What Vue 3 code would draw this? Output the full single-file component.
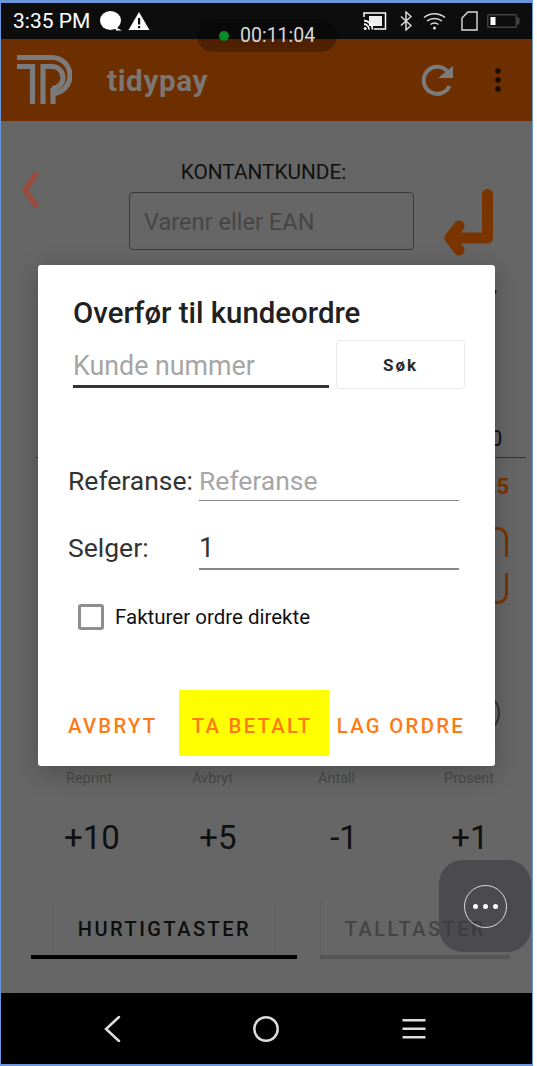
<template>
  <div class="phone">
    <div class="status-bar">
      <span class="time">3:35 PM</span>
      <svg width="24" height="22" viewBox="0 0 24 22">
        <ellipse cx="11.500" cy="10.500" rx="10.500" ry="9.500" fill="#fff" />
        <path d="M16 17l7 3.500h-6z" fill="#fff" />
      </svg>
      <svg class="st-warn" width="22" height="20" viewBox="0 0 22 20">
        <path d="M11 1L21.500 19H.5z" fill="#fff" />
        <rect x="10" y="7" width="2.200" height="6.500" fill="#0d0d0d" />
        <rect x="10" y="15" width="2.200" height="2.200" fill="#0d0d0d" />
      </svg>
      <div class="st-right">
        <svg width="24" height="20" viewBox="0 0 24 20" fill="none" stroke="#fff" stroke-width="1.500">
          <path d="M1 6V2h21.500v16H11" />
          <rect x="6" y="5" width="13" height="10" fill="#eee" stroke="none" />
          <path d="M1 9.500a9 9 0 0 1 8.500 9M1 13a5.500 5.500 0 0 1 5 5.500" stroke-width="1.800" />
          <circle cx="2.200" cy="17.500" r="1.500" fill="#fff" stroke="none" />
        </svg>
        <svg class="st-bt" width="12" height="20" viewBox="0 0 12 20" fill="none" stroke="#ddd" stroke-width="1.500">
          <path d="M1 5.500l10 9-5 4.500V1l5 4.500-10 9" />
        </svg>
        <svg class="st-wifi" width="23" height="18" viewBox="0 0 23 18" fill="none" stroke="#ddd" stroke-width="1.500">
          <path d="M1 5.500c6-5 15-5 21 0M4 9c4.500-3.500 10.500-3.500 15 0M7.500 12.500c2.500-2 5.500-2 8 0" />
          <circle cx="11.500" cy="16" r="1.500" fill="#ddd" stroke="none" />
        </svg>
        <svg class="st-sim" width="17" height="20" viewBox="0 0 17 20" fill="none" stroke="#ddd" stroke-width="1.400">
          <path d="M7 1h9v18H1V7z" />
        </svg>
        <svg class="st-batt" width="33" height="14" viewBox="0 0 33 14">
          <rect x=".7" y=".7" width="28.600" height="12.600" rx="1" fill="none" stroke="#444" stroke-width="1.400" />
          <rect x="30" y="3.500" width="2.500" height="7" fill="#444" />
          <rect x="3.500" y="3" width="5" height="8" fill="#fff" />
        </svg>
      </div>
    </div>

    <header class="app-bar">
      <svg class="logo" width="56" height="52" viewBox="0 0 56 52" fill="none" stroke="#7b7b7b" stroke-width="5.200">
        <path d="M1 3.500h35a18 18 0 0 1 0 36" />
        <path d="M1 12.500h15.500V50" />
        <path d="M27 50V12.500h9a11 11 0 0 1 0 22" />
        <path d="M37 34v16" />
      </svg>
      <span class="brand">tidypay</span>
      <svg class="refresh" width="36" height="36" viewBox="0 0 36 36" fill="none">
        <path d="M29.500 24A13.500 13.500 0 1 1 27 9" stroke="#7b7b7b" stroke-width="4" />
        <path d="M33 4v12H18z" fill="#7b7b7b" />
      </svg>
      <svg class="more" width="6" height="24" viewBox="0 0 6 24" fill="#1c0c00">
        <circle cx="3" cy="3" r="2.800" />
        <circle cx="3" cy="12" r="2.800" />
        <circle cx="3" cy="21" r="2.800" />
      </svg>
    </header>

    <main class="content">
      <div class="search-row">
        <svg class="back-arrow" width="20" height="38" viewBox="0 0 20 38" fill="none" stroke="#9a4b3e" stroke-width="5.500">
          <path d="M16 2L4 19l12 17" />
        </svg>
        <div class="search-col">
          <div class="kunde-label">KONTANTKUNDE:</div>
          <div class="ean-box">Varenr eller EAN</div>
        </div>
        <svg class="enter-arrow" width="60" height="76" viewBox="0 0 60 76" fill="none" stroke="#7a3400" stroke-width="11" stroke-linecap="round" stroke-linejoin="round">
          <path d="M47.500 10.500V54H10" />
          <path d="M19 42L10 54l9 12" />
        </svg>
      </div>

      <div class="hidden-rows">
        <div class="peek peek-seven">7</div>
        <div class="peek peek-zero">0</div>
        <div class="peek peek-sum">25</div>
        <div class="peek-bracket"></div>
        <div class="peek-circle"></div>
      </div>

      <div class="key-labels">
        <span v-for="k in keyLabels" :key="k">{{ k }}</span>
      </div>
      <div class="key-values">
        <span v-for="v in keyValues" :key="v">{{ v }}</span>
      </div>

      <div class="tabs">
        <div class="tab active"><span>HURTIGTASTER</span></div>
        <div class="tab"><span>TALLTASTER</span></div>
      </div>
    </main>

    <nav class="nav-bar">
      <svg width="20" height="28" viewBox="0 0 20 28" fill="none" stroke="#ddd" stroke-width="2.500" stroke-linecap="round">
        <path d="M17 2L4 14l13 12" />
      </svg>
      <svg class="nav-home" width="28" height="28" viewBox="0 0 28 28" fill="none" stroke="#ddd" stroke-width="2.500">
        <circle cx="14" cy="14" r="11.700" />
      </svg>
      <svg width="24" height="22" viewBox="0 0 24 22" fill="#ddd">
        <rect x=".5" y="1" width="23" height="2.500" />
        <rect x=".5" y="9.500" width="23" height="2.500" />
        <rect x=".5" y="18" width="23" height="2.500" />
      </svg>
    </nav>

    <div class="timer-pill">
      <i class="dot"></i>
      <span>00:11:04</span>
    </div>

    <div class="dialog">
      <h2>Overfør til kundeordre</h2>
      <div class="customer-row">
        <div class="customer-input">Kunde nummer</div>
        <button class="sok">Søk</button>
      </div>
      <div class="field ref-field">
        <label>Referanse:</label>
        <div class="field-input placeholder">Referanse</div>
      </div>
      <div class="field sel-field">
        <label>Selger:</label>
        <div class="field-input thick">1</div>
      </div>
      <div class="check-row">
        <span class="checkbox"></span>
        <span>Fakturer ordre direkte</span>
      </div>
      <div class="actions">
        <span class="a-cancel">AVBRYT</span>
        <span class="a-paid">TA BETALT</span>
        <span class="a-order">LAG ORDRE</span>
      </div>
    </div>

    <div class="fab">
      <div class="fab-ring">
        <i></i><i></i><i></i>
      </div>
    </div>
  </div>
</template>

<script setup>
const keyLabels = ['Reprint', 'Avbryt', 'Antall', 'Prosent']
const keyValues = ['+10', '+5', '-1', '+1']
</script>

<style>
html, body {
  margin: 0;
  background: #fff;
}
</style>

<style scoped>
.phone {
  position: relative;
  box-sizing: border-box;
  width: 533px;
  height: 1066px;
  display: flex;
  flex-direction: column;
  border: 1px solid #6b95dd;
  border-width: 3px 1px 2px 1px;
  background: #666;
  font-family: Roboto, "Liberation Sans", sans-serif;
  overflow: hidden;
}

.status-bar {
  flex: 0 0 36px;
  display: flex;
  align-items: center;
  padding-left: 12px;
  background: #0d0d0d;
  color: #fff;
}

.time {
  font-size: 21px;
  width: 86px;
  white-space: nowrap;
}

.st-warn {
  margin-left: 5px;
}

.st-right {
  margin-left: auto;
  display: flex;
  align-items: center;
  padding-right: 12px;
}

.st-bt {
  margin-left: 13px;
}

.st-wifi {
  margin-left: 11px;
}

.st-sim {
  margin-left: 15px;
}

.st-batt {
  margin-left: 9px;
}

.app-bar {
  flex: 0 0 82px;
  display: flex;
  align-items: center;
  padding-left: 15px;
  background: #6e2f00;
}

.brand {
  margin-left: 35px;
  font-size: 29.700px;
  font-weight: 700;
  letter-spacing: 0.6px;
  color: #7b7672;
}

.refresh {
  margin-left: auto;
}

.more {
  margin: 0 31px 0 39px;
}

.content {
  flex: 1;
  display: flex;
  flex-direction: column;
  background: #666;
}

.search-row {
  display: flex;
  align-items: flex-start;
  height: 140px;
  padding: 40px 0 0 20px;
  box-sizing: border-box;
}

.back-arrow {
  margin-top: 10px;
}

.search-col {
  width: 285px;
  margin-left: 88px;
  text-align: center;
}

.kunde-label {
  padding-right: 16px;
  font-size: 20.800px;
  line-height: 22px;
  color: #111;
  white-space: nowrap;
}

.ean-box {
  box-sizing: border-box;
  height: 58px;
  margin-top: 9px;
  padding-left: 14px;
  line-height: 58px;
  font-size: 23.600px;
  text-align: left;
  color: #464646;
  border: 1px solid #3a3a3a;
  border-radius: 4px;
}

.enter-arrow {
  margin: 23px 0 0 26px;
}

.hidden-rows {
  position: relative;
  height: 508px;
}

.peek {
  position: absolute;
  font-size: 22px;
  color: #111;
}

.peek-seven {
  left: 484px;
  top: 25px;
}

.peek-zero {
  left: 489px;
  top: 165px;
}

.hidden-rows::after {
  content: "";
  position: absolute;
  left: 35px;
  right: 6px;
  top: 196px;
  height: 1px;
  background: #333;
}

.peek-sum {
  left: 483px;
  top: 213px;
  font-weight: 700;
  color: #7a3400;
}

.peek-bracket {
  position: absolute;
  left: 440px;
  top: 266px;
  width: 67px;
  height: 77px;
  box-sizing: border-box;
  border: 3px solid #7a3400;
  border-radius: 10px;
}

.peek-bracket::after {
  content: "";
  position: absolute;
  right: -4px;
  top: 27px;
  width: 6px;
  height: 16px;
  background: #666;
}

.peek-circle {
  position: absolute;
  left: 457px;
  top: 431px;
  width: 42px;
  height: 42px;
  box-sizing: border-box;
  border: 2px solid #333;
  border-radius: 50%;
}

.key-labels {
  display: grid;
  grid-template-columns: repeat(4, 126px);
  padding-left: 65px;
  height: 20px;
  font-size: 14.500px;
  line-height: 20px;
  color: #4a4a4a;
}

.key-values {
  display: grid;
  grid-template-columns: repeat(4, 126px);
  margin-top: 29px;
  padding-left: 28px;
  height: 40px;
  font-size: 33px;
  line-height: 40px;
  color: #111;
  text-align: center;
}

.tabs {
  display: flex;
  margin-top: 42px;
  padding-left: 30px;
}

.tab {
  box-sizing: border-box;
  height: 59px;
  font-size: 20px;
  font-weight: 500;
  letter-spacing: 2.500px;
  border-bottom: 4px solid #555;
}

.tab span {
  display: block;
  box-sizing: border-box;
  height: 100%;
  padding-left: 1px;
  line-height: 58px;
  text-align: center;
  border-left: 1px solid #616161;
  border-right: 1px solid #616161;
}

.tab.active {
  width: 266px;
  padding: 0 22px;
  color: #0e0e0e;
  border-bottom-color: #000;
}

.tab:not(.active) {
  width: 190px;
  margin-left: 23px;
  color: #444;
}

.nav-bar {
  flex: 0 0 71px;
  display: flex;
  align-items: center;
  padding: 0 106px 0 101px;
  justify-content: space-between;
  background: #000;
}

.nav-home {
  margin-left: 8px;
}

.timer-pill {
  position: absolute;
  left: 196px;
  top: 16px;
  box-sizing: border-box;
  width: 140px;
  height: 33px;
  display: flex;
  align-items: center;
  gap: 11px;
  padding-left: 22px;
  border-radius: 16px;
  background: rgba(0, 0, 0, 0.28);
  color: #d8d8d8;
  font-size: 19.500px;
}

.dot {
  flex: none;
  width: 10px;
  height: 10px;
  border-radius: 50%;
  background: #0a8a2a;
}

.dialog {
  position: absolute;
  left: 37px;
  top: 262px;
  box-sizing: border-box;
  width: 457px;
  height: 501px;
  padding: 30px 30px 0 30px;
  background: #fff;
  border-radius: 3px;
  box-shadow: 0 6px 24px rgba(0, 0, 0, 0.25);
  display: flex;
  flex-direction: column;
}

h2 {
  margin: 0 0 0 5px;
  font-size: 29.400px;
  line-height: 36px;
  font-weight: 500;
  color: #212121;
  white-space: nowrap;
}

.customer-row {
  display: flex;
  margin: 9px 0 0 5px;
  align-items: flex-start;
}

.customer-input {
  box-sizing: border-box;
  width: 256px;
  height: 48px;
  font-size: 26.800px;
  line-height: 52px;
  color: #a6a6a6;
  border-bottom: 3px solid #333;
}

.sok {
  width: 129px;
  height: 49px;
  margin-left: 7px;
  font-family: inherit;
  font-size: 17px;
  font-weight: 700;
  letter-spacing: 2px;
  color: #2a2a2a;
  background: #fff;
  border: 1px solid #e8e8e8;
  border-radius: 4px;
}

.field {
  display: flex;
  align-items: flex-end;
  font-size: 26.500px;
  color: #333;
}

.field label {
  width: 131px;
  line-height: 36px;
  padding-bottom: 2px;
  white-space: nowrap;
}

.ref-field {
  margin-top: 72px;
}

.sel-field {
  margin-top: 29px;
}

.sel-field label {
  padding-bottom: 4px;
}

.field-input {
  box-sizing: border-box;
  width: 260px;
  height: 40px;
  line-height: 40px;
  border-bottom: 1px solid #888;
}

.field-input.placeholder {
  color: #a6a6a6;
}

.field-input.thick {
  border-bottom: 2px solid #888;
  font-size: 27px;
  line-height: 36px;
  color: #333;
}

.check-row {
  display: flex;
  align-items: center;
  gap: 11px;
  margin: 34px 0 0 10px;
  font-size: 20.500px;
  color: #111;
}

.checkbox {
  box-sizing: border-box;
  width: 26px;
  height: 26px;
  border: 3px solid #8e8e8e;
  border-radius: 3px;
}

.actions {
  display: flex;
  align-items: center;
  margin: 60px 0 0 0;
  height: 66px;
  font-size: 20.300px;
  font-weight: 500;
  letter-spacing: 2.300px;
  color: #ff7a14;
}

.a-cancel {
  width: 112px;
  padding-top: 6px;
}

.a-paid {
  box-sizing: border-box;
  width: 150px;
  height: 66px;
  padding-right: 4px;
  line-height: 72px;
  text-align: center;
  background: #ff0;
}

.a-order {
  margin-left: 8px;
  padding-top: 6px;
  white-space: nowrap;
}

.fab {
  position: absolute;
  left: 438px;
  top: 857px;
  width: 92px;
  height: 92px;
  display: flex;
  align-items: center;
  justify-content: center;
  border-radius: 24px;
  background: rgba(56, 56, 64, 0.6);
}

.fab-ring {
  box-sizing: border-box;
  width: 43px;
  height: 43px;
  display: flex;
  align-items: center;
  justify-content: center;
  gap: 5px;
  border: 1px solid #ddd;
  border-radius: 50%;
}

.fab-ring i {
  width: 5px;
  height: 5px;
  border-radius: 50%;
  background: #fff;
}
</style>
